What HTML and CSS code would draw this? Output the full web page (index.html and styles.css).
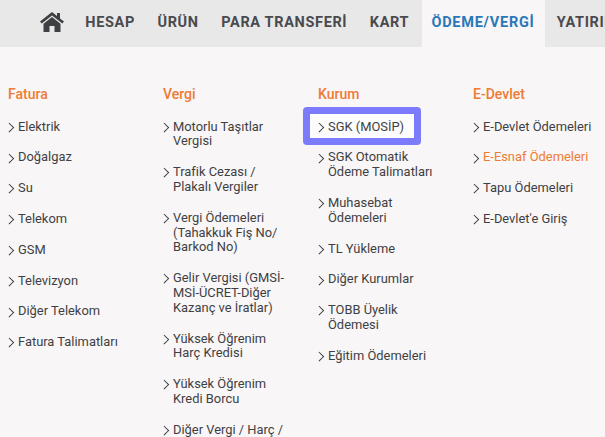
FILE: index.html
```html
<!DOCTYPE html>
<html lang="tr">
<head>
<meta charset="utf-8">
<title>Ödeme/Vergi</title>
<link rel="stylesheet" href="styles.css">
</head>
<body>
<nav class="nav">
  <a class="home" href="#" aria-label="Ana sayfa">
    <svg viewBox="0 0 24 20" width="24" height="20"><path d="M12 0 L0 9.6 L1.7 11.6 L12 3.4 L22.3 11.6 L24 9.6 L20 6.4 V1 H17 V4 Z" fill="#3f4044"/><path d="M12 5 L3.5 11.8 V20 H9.5 V14 H14.5 V20 H20.5 V11.8 Z" fill="#3f4044"/></svg>
  </a>
  <a class="tab" href="#">HESAP</a>
  <a class="tab" href="#">ÜRÜN</a>
  <a class="tab" href="#">PARA TRANSFERİ</a>
  <a class="tab" href="#">KART</a>
  <a class="tab active" href="#">ÖDEME/VERGİ</a>
  <a class="tab" href="#">YATIRIM</a>
</nav>
<main class="menu">
  <section class="col">
    <h3>Fatura</h3>
    <ul>
      <li><a href="#">Elektrik</a></li>
      <li><a href="#">Doğalgaz</a></li>
      <li><a href="#">Su</a></li>
      <li><a href="#">Telekom</a></li>
      <li><a href="#">GSM</a></li>
      <li><a href="#">Televizyon</a></li>
      <li><a href="#">Diğer Telekom</a></li>
      <li><a href="#">Fatura Talimatları</a></li>
    </ul>
  </section>
  <section class="col">
    <h3>Vergi</h3>
    <ul>
      <li><a href="#">Motorlu Taşıtlar<br>Vergisi</a></li>
      <li><a href="#">Trafik Cezası /<br>Plakalı Vergiler</a></li>
      <li><a href="#">Vergi Ödemeleri<br>(Tahakkuk Fiş No/<br>Barkod No)</a></li>
      <li><a href="#">Gelir Vergisi (GMSİ-<br>MSİ-ÜCRET-Diğer<br>Kazanç ve İratlar)</a></li>
      <li><a href="#">Yüksek Öğrenim<br>Harç Kredisi</a></li>
      <li><a href="#">Yüksek Öğrenim<br>Kredi Borcu</a></li>
      <li><a href="#">Diğer Vergi / Harç /<br>Ceza</a></li>
    </ul>
  </section>
  <section class="col">
    <h3>Kurum</h3>
    <ul>
      <li class="marked"><a href="#">SGK (MOSİP)</a></li>
      <li><a href="#">SGK Otomatik<br>Ödeme Talimatları</a></li>
      <li><a href="#">Muhasebat<br>Ödemeleri</a></li>
      <li><a href="#">TL Yükleme</a></li>
      <li><a href="#">Diğer Kurumlar</a></li>
      <li><a href="#">TOBB Üyelik<br>Ödemesi</a></li>
      <li><a href="#">Eğitim Ödemeleri</a></li>
    </ul>
  </section>
  <section class="col">
    <h3>E-Devlet</h3>
    <ul>
      <li><a href="#">E-Devlet Ödemeleri</a></li>
      <li><a class="current" href="#">E-Esnaf Ödemeleri</a></li>
      <li><a href="#">Tapu Ödemeleri</a></li>
      <li><a href="#">E-Devlet'e Giriş</a></li>
    </ul>
  </section>
</main>
</body>
</html>
```
FILE: styles.css
```css
*, *::before, *::after { box-sizing: border-box; }
html, body { height: 100%; }
body {
  margin: 0;
  overflow: hidden;
  background: #f8f6f7;
  color: #3f3f43;
  font-family: Roboto, "Liberation Sans", sans-serif;
}
a { color: inherit; text-decoration: none; }
.nav {
  display: flex;
  align-items: stretch;
  height: 47px;
  padding-left: 40px;
  background: #e8e8e8;
  white-space: nowrap;
  overflow: hidden;
}
.home { display: flex; flex: none; align-items: center; width: 34px; padding-bottom: 3px; }
.tab {
  display: flex;
  flex: none;
  align-items: center;
  padding: 0 11.25px 3px;
  font-size: 14.5px;
  font-weight: 700;
  letter-spacing: 0.65px;
  color: #4a4a4e;
}
.tab.active {
  margin: 0 1px 0 2px;
  padding: 0 10px 3px 9px;
  background: #f8f6f7;
  color: #2a78b8;
  letter-spacing: 0.75px;
}
.menu { display: flex; padding: 38px 0 0 8px; }
.col { flex: 0 0 155px; }
h3 {
  margin: 0 0 16.6px;
  font-size: 14px;
  line-height: 18px;
  font-weight: 500;
  color: #ee7b33;
}
ul { margin: 0; padding: 0; list-style: none; }
li {
  position: relative;
  margin-bottom: 16px;
  padding-left: 10px;
  font-size: 12.9px;
  line-height: 14.8px;
}
li::before {
  content: "";
  position: absolute;
  left: -1.8px;
  top: 4.2px;
  width: 6.5px;
  height: 6.5px;
  border-top: 1.5px solid #3c3c40;
  border-right: 1.5px solid #3c3c40;
  transform: rotate(45deg);
}
.marked::after {
  content: "";
  position: absolute;
  z-index: -1;
  left: -15px;
  top: -12.5px;
  width: 118px;
  height: 38px;
  border: 7px solid #7b7bfb;
  border-radius: 4px;
  background: #fdfcfd;
}
.current { color: #ee7b33; }
```
